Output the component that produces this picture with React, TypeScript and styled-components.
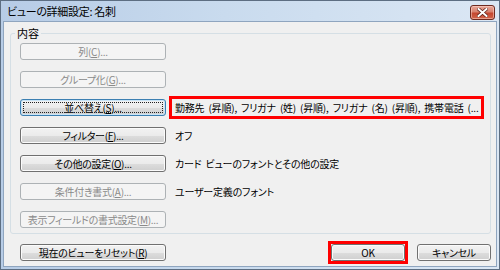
import React from "react";
import styled, { createGlobalStyle, css } from "styled-components";

const GlobalStyle = createGlobalStyle`
  html, body {
    margin: 0;
    padding: 0;
    background: #ffffff;
  }
  body {
    font-family: "Noto Sans CJK JP", "Noto Sans", sans-serif;
    font-feature-settings: "palt";
  }
`;

const Window = styled.div`
  width: 500px;
  height: 270px;
  box-sizing: border-box;
  border: 1px solid #5d6e82;
  background: linear-gradient(to right, #b7cce6 0%, #c9dbee 45%, #dbe7f4 100%);
  padding: 0 2px 2px 2px;
  display: flex;
  flex-direction: column;
`;

const TitleBar = styled.div`
  height: 20px;
  display: flex;
  align-items: flex-start;
  justify-content: space-between;
  padding: 3px 2px 0 4px;
  box-sizing: border-box;
`;

const Title = styled.div`
  font-size: 11px;
  line-height: 14px;
  letter-spacing: -0.3px;
  color: #000;
`;

const CloseButton = styled.div`
  width: 25px;
  height: 15px;
  margin-top: 1px;
  box-sizing: border-box;
  border: 1px solid #6e2a20;
  border-radius: 3px;
  background: linear-gradient(#e9a89a 0%, #d9826f 45%, #c4462f 55%, #d2654b 100%);
  box-shadow: inset 0 0 0 1px rgba(255, 220, 210, 0.5);
  display: flex;
  align-items: center;
  justify-content: center;
`;

const Content = styled.div`
  flex: 1;
  border: 1px solid #8fa5bf;
  background: #f0f0f0;
  padding: 11px 5px 5px 6px;
  display: flex;
  flex-direction: column;
`;

const GroupBox = styled.div`
  position: relative;
  height: 201px;
  box-sizing: border-box;
  border: 1px solid #d5dfe5;
  border-radius: 3px;
  padding: 9px 0 0 9px;
  display: flex;
  flex-direction: column;
  gap: 11px;
`;

const Legend = styled.div`
  position: absolute;
  top: -8px;
  left: 4px;
  padding: 0 2px;
  background: #f0f0f0;
  font-size: 11px;
  line-height: 14px;
  color: #000;
`;

const Row = styled.div`
  display: flex;
  align-items: center;
  height: 17px;
`;

const Button = styled.div<{ $disabled?: boolean; $focused?: boolean; $width?: number }>`
  width: ${(p) => p.$width ?? 146}px;
  height: 17px;
  box-sizing: border-box;
  border: 1px solid #707070;
  border-radius: 3px;
  background: linear-gradient(#f2f2f2 0%, #ebebeb 50%, #dddddd 52%, #cfcfcf 100%);
  box-shadow: inset 0 0 0 1px #fbfbfb;
  font-size: 10px;
  letter-spacing: -0.3px;
  line-height: 15px;
  text-align: center;
  color: #000;
  white-space: nowrap;
  position: relative;
  flex-shrink: 0;

  ${(p) =>
    p.$disabled &&
    css`
      border-color: #adb2b5;
      background: #f4f4f4;
      box-shadow: none;
      color: #8a8a8a;
    `}

  ${(p) =>
    p.$focused &&
    css`
      border-color: #3c7fb1;
      box-shadow: inset 0 0 0 1px #c8e4f7;
      &::after {
        content: "";
        position: absolute;
        inset: 2px;
        border: 1px dotted #202020;
        border-radius: 1px;
      }
    `}
`;

const Value = styled.div<{ $highlight?: boolean }>`
  margin-left: 6px;
  width: 309px;
  height: 17px;
  box-sizing: border-box;
  padding-left: 3px;
  font-size: 10px;
  letter-spacing: -0.2px;
  word-spacing: 2px;
  line-height: 17px;
  color: #000;
  white-space: nowrap;
  overflow: hidden;

  ${(p) =>
    p.$highlight &&
    css`
      outline: 3px solid #ff0000;
      outline-offset: 0;
    `}
`;

const BottomRow = styled.div`
  margin-top: 10px;
  padding-left: 10px;
  display: flex;
  align-items: center;
  justify-content: space-between;
`;

const RightButtons = styled.div`
  display: flex;
  gap: 12px;
`;

const Marked = styled.div`
  outline: 3px solid #ff0000;
`;

type RowData = {
  text: string;
  key: string;
  disabled?: boolean;
  focused?: boolean;
  value?: string;
  highlight?: boolean;
};

const rows: RowData[] = [
  { text: "列", key: "C", disabled: true },
  { text: "グループ化", key: "G", disabled: true },
  {
    text: "並べ替え",
    key: "S",
    focused: true,
    value: "勤務先 (昇順), フリガナ (姓) (昇順), フリガナ (名) (昇順), 携帯電話 (...",
    highlight: true,
  },
  { text: "フィルター", key: "F", value: "オフ" },
  { text: "その他の設定", key: "O", value: "カード ビューのフォントとその他の設定" },
  { text: "条件付き書式", key: "A", disabled: true, value: "ユーザー定義のフォント" },
  { text: "表示フィールドの書式設定", key: "M", disabled: true },
];

const CloseIcon = () => (
  <svg width="11" height="9" viewBox="0 0 11 9">
    <path
      d="M1.5 1 L9.5 8 M9.5 1 L1.5 8"
      stroke="#5a1e16"
      strokeWidth="3.4"
      strokeLinecap="square"
    />
    <path
      d="M1.5 1 L9.5 8 M9.5 1 L1.5 8"
      stroke="#ffffff"
      strokeWidth="2"
      strokeLinecap="square"
    />
  </svg>
);

const App: React.FC = () => {
  return (
    <>
      <GlobalStyle />
      <Window>
        <TitleBar>
          <Title>ビューの詳細設定: 名刺</Title>
          <CloseButton>
            <CloseIcon />
          </CloseButton>
        </TitleBar>
        <Content>
          <GroupBox>
            <Legend>内容</Legend>
            {rows.map((r) => (
              <Row key={r.key}>
                <Button $disabled={r.disabled} $focused={r.focused}>
                  {r.text}(<u>{r.key}</u>)...
                </Button>
                {r.value && <Value $highlight={r.highlight}>{r.value}</Value>}
              </Row>
            ))}
          </GroupBox>
          <BottomRow>
            <Button>
              現在のビューをリセット(<u>R</u>)
            </Button>
            <RightButtons>
              <Marked>
                <Button $width={74}>OK</Button>
              </Marked>
              <Button $width={74}>キャンセル</Button>
            </RightButtons>
          </BottomRow>
        </Content>
      </Window>
    </>
  );
};

export default App;
